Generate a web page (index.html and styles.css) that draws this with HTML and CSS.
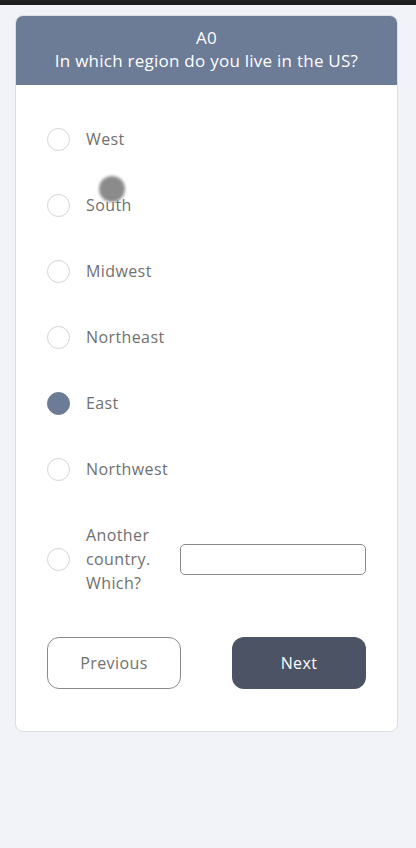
FILE: index.html
```html
<!DOCTYPE html>
<html lang="en">
<head>
    <meta charset="UTF-8">
    <meta name="viewport" content="width=device-width, initial-scale=1.0">
    <title>Survey</title>
    <link rel="stylesheet" href="styles.css">
</head>
<body>
    <div class="status-bar"></div>
    <div class="page">
        <div class="card">
            <div class="card-header">
                <div>A0</div>
                <div>In which region do you live in the US?</div>
            </div>
            <form class="card-body">
                <label class="option">
                    <span class="radio"></span>
                    <span class="option-label">West</span>
                </label>
                <label class="option">
                    <span class="radio"></span>
                    <span class="option-label">South</span>
                </label>
                <label class="option">
                    <span class="radio"></span>
                    <span class="option-label">Midwest</span>
                </label>
                <label class="option">
                    <span class="radio"></span>
                    <span class="option-label">Northeast</span>
                </label>
                <label class="option">
                    <span class="radio checked"></span>
                    <span class="option-label">East</span>
                </label>
                <label class="option">
                    <span class="radio"></span>
                    <span class="option-label">Northwest</span>
                </label>
                <label class="option other">
                    <span class="radio"></span>
                    <span class="option-label narrow">Another country. Which?</span>
                    <input type="text" class="other-input">
                </label>
                <div class="buttons">
                    <button type="button" class="btn btn-prev">Previous</button>
                    <button type="button" class="btn btn-next">Next</button>
                </div>
            </form>
        </div>
    </div>
    <div class="touch-dot"></div>
</body>
</html>
```

FILE: styles.css
```css
body {
    font-family: "Open Sans", Arial, sans-serif;
    background-color: #f2f3f8;
    margin: 0;
    padding: 0;
}
.status-bar {
    height: 5px;
    background-color: #1f1f1f;
}
.page {
    padding: 10px 18px 0 15px;
}
.card {
    background: white;
    border: 1px solid #dcdde2;
    border-radius: 8px;
    overflow: hidden;
}
.card-header {
    background-color: #6c7b96;
    color: white;
    text-align: center;
    font-size: 17px;
    letter-spacing: 0.25px;
    line-height: 23px;
    padding: 10px 10px 13px;
}
.card-body {
    display: flex;
    flex-direction: column;
    padding: 21px 31px 42px;
    margin: 0;
}
.option {
    display: flex;
    align-items: center;
    padding: 21px 0;
    color: #707070;
    font-size: 16px;
    letter-spacing: 0.4px;
    line-height: 24px;
}
.radio {
    width: 21px;
    height: 21px;
    border: 1px solid #d3d3d3;
    border-radius: 50%;
    margin-right: 16px;
    flex-shrink: 0;
}
.radio.checked {
    background-color: #6c7b96;
    border-color: #6c7b96;
}
.option-label.narrow {
    width: 80px;
    margin-right: 14px;
}
.other-input {
    flex: 1;
    height: 29px;
    border: 1px solid #8a8a8a;
    border-radius: 5px;
    padding: 0;
    min-width: 0;
}
.buttons {
    display: flex;
    justify-content: space-between;
    margin-top: 21px;
}
.btn {
    width: 134px;
    height: 52px;
    border-radius: 12px;
    font-family: "Open Sans", Arial, sans-serif;
    font-size: 16px;
    letter-spacing: 0.4px;
}
.btn-prev {
    background: white;
    border: 1px solid #8a8a8a;
    color: #707070;
}
.btn-next {
    background-color: #4b5365;
    border: none;
    color: white;
    font-weight: 500;
}
.touch-dot {
    position: absolute;
    left: 99px;
    top: 176px;
    width: 26px;
    height: 26px;
    border-radius: 50%;
    background: rgba(110, 110, 110, 0.8);
    filter: blur(1.5px);
}
```
